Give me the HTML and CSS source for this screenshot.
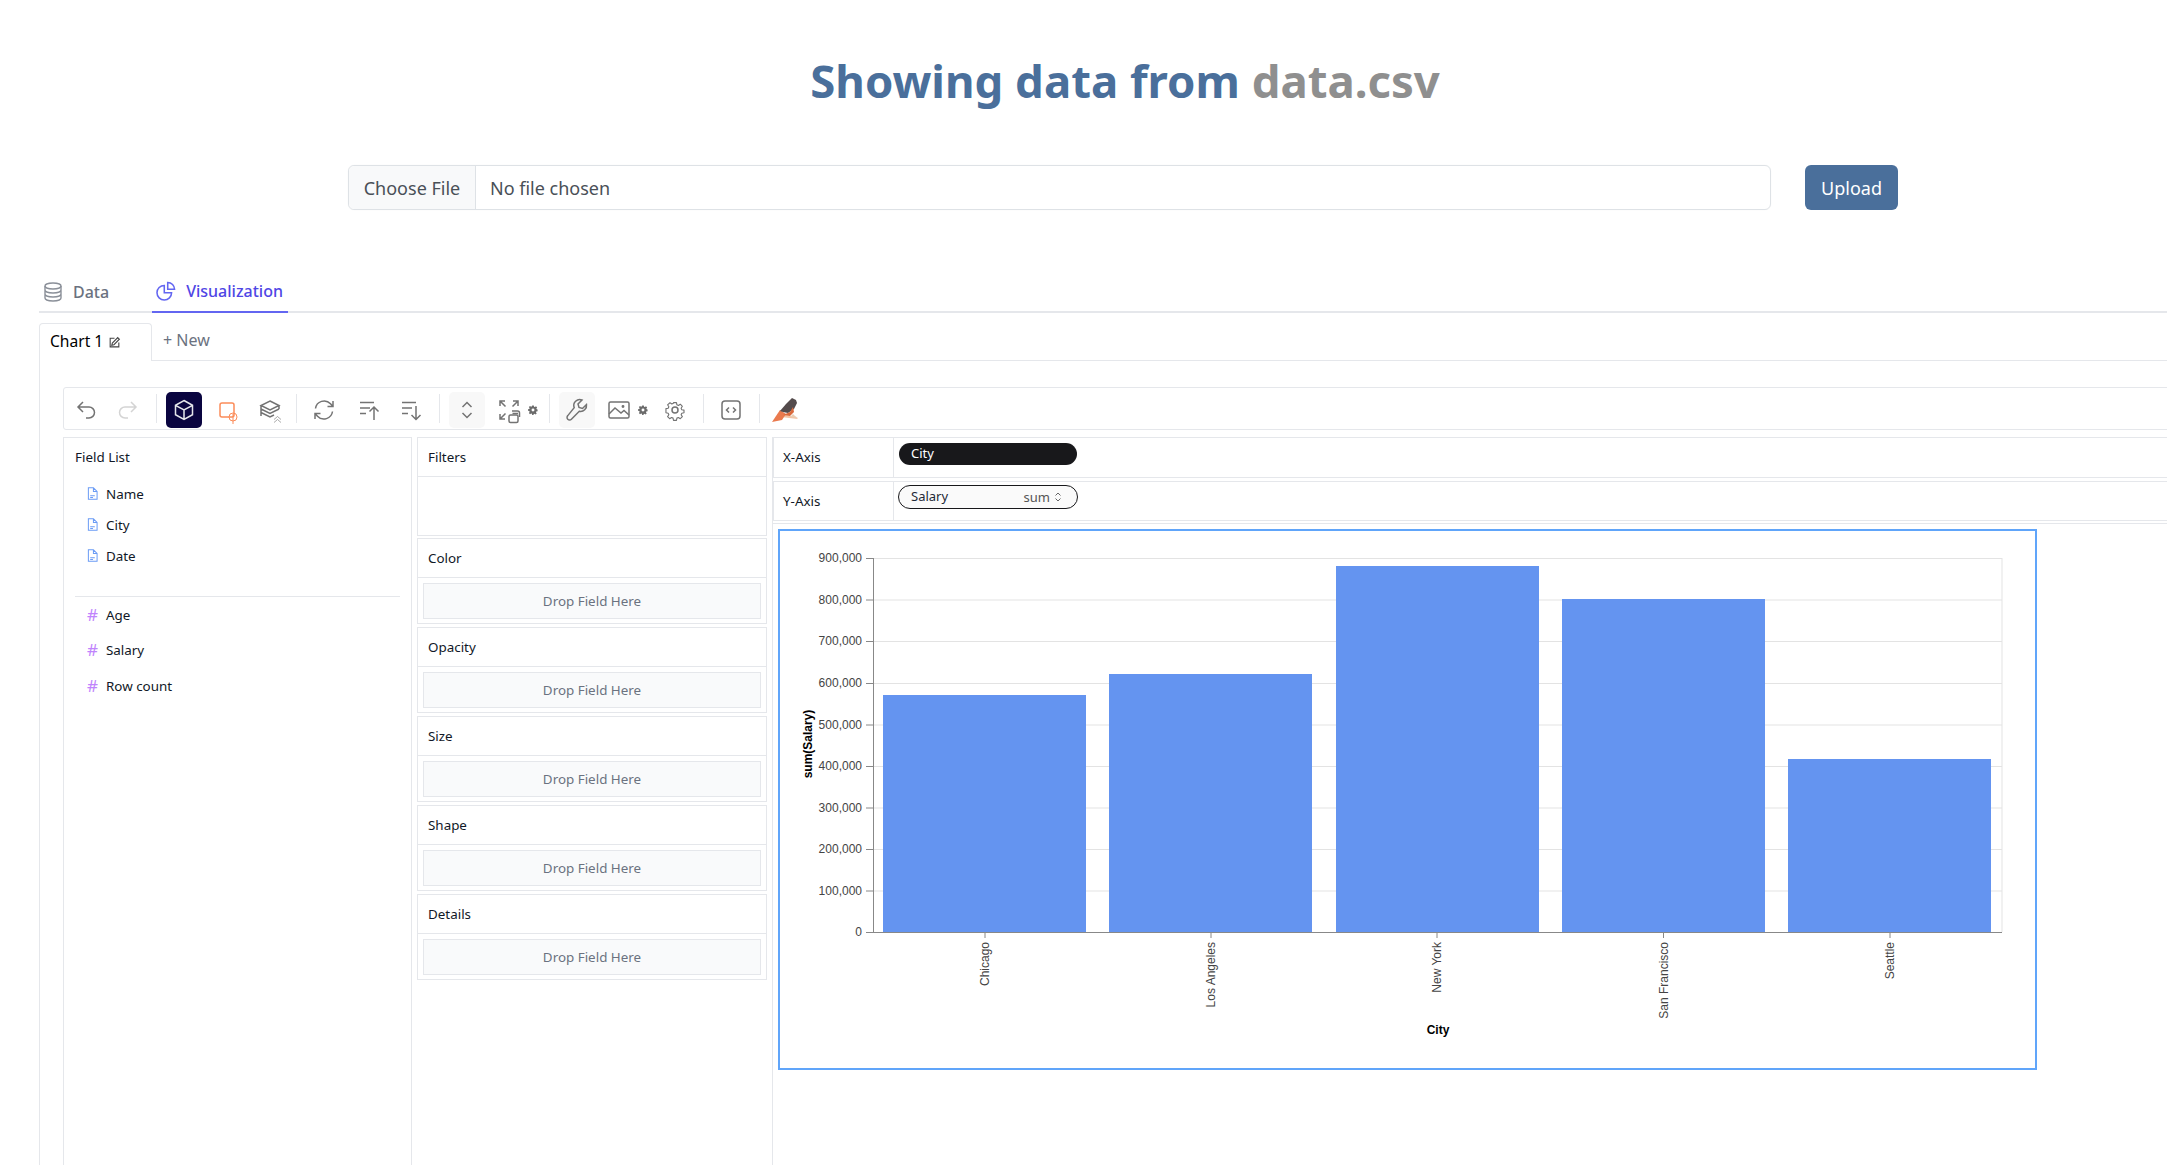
FILE: index.html
```html
<!DOCTYPE html>
<html lang="en">
<head>
    <meta charset="UTF-8">
    <title>Showing data from data.csv</title>
    <link rel="stylesheet" href="styles.css">
</head>
<body>
    <div class="page">
        <h1 class="page-title">Showing data from <span class="file-name">data.csv</span></h1>

        <form class="upload-row">
            <div class="file-input">
                <span class="file-btn">Choose File</span>
                <span class="file-status">No file chosen</span>
            </div>
            <button type="button" class="upload-btn">Upload</button>
        </form>

        <div class="main-tabs">
            <div class="main-tab">
                <svg class="main-tab-icon" viewBox="0 0 24 24" fill="none" stroke="currentColor" stroke-width="1.4"><ellipse cx="12" cy="6" rx="8" ry="3"/><path d="M4 6v12c0 1.700 3.600 3 8 3s8-1.300 8-3V6M4 10c0 1.700 3.600 3 8 3s8-1.300 8-3M4 14c0 1.700 3.600 3 8 3s8-1.300 8-3"/></svg>
                Data
            </div>
            <div class="main-tab active">
                <svg class="main-tab-icon" viewBox="-2 -2 28 28" fill="none" stroke="currentColor" stroke-width="1.8"><path d="M10 5.500a8.500 8.500 0 1 0 8.500 8.500H10z"/><path d="M14 2a8 8 0 0 1 8 8h-8z"/></svg>
                Visualization
            </div>
        </div>

        <div class="chart-tabs">
            <div class="chart-tab">Chart 1
                <svg class="edit-icon" viewBox="0 0 24 24" fill="none" stroke="currentColor" stroke-width="2"><path d="M12 4H4v16h16v-8"/><path d="M18 3l3 3L11 16l-4 1 1-4z"/></svg>
            </div>
            <div class="chart-new">+ New</div>
        </div>

        <div class="workspace">
            <div class="toolbar">
                <div class="tool"><svg viewBox="0 0 24 24"><path d="M9 14L4 9l5-5M4 9h11a5.500 5.500 0 0 1 0 11h-3"/></svg></div>
                <div class="tool disabled"><svg viewBox="0 0 24 24"><path d="M15 14l5-5-5-5M20 9H9a5.500 5.500 0 0 0 0 11h3"/></svg></div>
                <div class="tool-sep"></div>
                <div class="tool selected"><svg viewBox="0 0 24 24"><path d="M12 2.500l8.500 4.800v9.400L12 21.500l-8.500-4.800V7.300zM3.500 7.300L12 12l8.500-4.700M12 12v9.500"/></svg></div>
                <div class="tool orange"><svg viewBox="0 0 24 24"><rect x="6" y="5" width="14" height="14" rx="2"/><circle cx="19" cy="19" r="4" stroke-width="1"/><path d="M19 16v10" stroke-width="1"/></svg></div>
                <div class="tool"><svg viewBox="0 0 24 24"><g transform="translate(2 0)"><path d="M12 3l9 4.500-9 4.500-9-4.500zM3 11l9 4.500L21 11M3 14.500L12 19l4-2M3 7.500V18M21 7.500V11"/><path d="M16 21.500l3.500-3 3.500 3M16 24.500l3.500-3 3.500 3" stroke-width="1" opacity=".6"/></g></svg></div>
                <div class="tool-sep"></div>
                <div class="tool"><svg viewBox="0 0 24 24"><path d="M3.500 10.500a8.700 8.700 0 0 1 15-4.700l2.500 2.700M21 3v5.500h-5.500M20.500 13.500a8.700 8.700 0 0 1-15 4.700L3 15.500M3 21v-5.500h5.500"/></svg></div>
                <div class="tool tool-sort"><svg viewBox="0 0 24 24"><path d="M3 4.500h14M3 10h10M3 15.500h6M17 22V9M12.500 13.500L17 9l4.500 4.500"/></svg></div>
                <div class="tool"><svg viewBox="0 0 24 24"><path d="M3 4.500h14M3 10h10M3 15.500h6M17 8v13.500M12.500 17l4.500 4.500 4.500-4.500"/></svg></div>
                <div class="tool-sep"></div>
                <div class="tool soft"><svg viewBox="0 0 24 24"><path d="M7.500 9L12 4.500 16.500 9M7.500 15l4.500 4.500 4.500-4.500"/></svg></div>
                <div class="tool"><svg viewBox="0 0 24 24"><path d="M8 3H3v5M3 3l5.500 5.500M16 3h5v5M21 3l-5.500 5.500M3 16v5h5M3 21l5.500-5.500M15.500 15.500H21M15 13h5.500a2 2 0 0 1 2 2v4"/><rect x="12" y="17" width="9" height="7.500" rx="1.500" fill="#fff"/></svg></div>
                <div class="tool-mini"><svg viewBox="0 0 24 24"><path class="solid" d="M10 1h4l.6 3.100 1.900.8 2.700-1.800 2.700 2.700-1.800 2.700.8 1.900L23 11v4l-3.100.6-.8 1.900 1.800 2.700-2.700 2.700-2.700-1.800-1.900.8L13 24h-3l-.6-3.100-1.900-.8-2.700 1.800-2.700-2.700 1.800-2.700-.8-1.900L0 14v-4l3.100-.6.800-1.900-1.800-2.700 2.700-2.700 2.700 1.800 1.900-.8zM12 8.500a3.500 3.500 0 1 0 0 7 3.500 3.500 0 0 0 0-7z"/></svg></div>
                <div class="tool-sep"></div>
                <div class="tool soft"><svg viewBox="0 0 24 24"><path d="M21.500 6.500l-4 4-3.500-1-1-3.500 4-4a6 6 0 0 0-7.800 7.700L2.800 17.600a2.500 2.500 0 0 0 3.600 3.600l7.900-7.900a6 6 0 0 0 7.200-6.800z"/></svg></div>
                <div class="tool"><svg viewBox="0 0 24 24"><rect x="2" y="4" width="20" height="16" rx="1.500"/><path d="M2 16l6-6 6 5 3-2.500 5 4.500"/><circle cx="16" cy="8.500" r=".7"/></svg></div>
                <div class="tool-mini"><svg viewBox="0 0 24 24"><path class="solid" d="M10 1h4l.6 3.100 1.900.8 2.700-1.800 2.700 2.700-1.800 2.700.8 1.900L23 11v4l-3.100.6-.8 1.900 1.800 2.700-2.700 2.700-2.700-1.800-1.900.8L13 24h-3l-.6-3.100-1.900-.8-2.700 1.800-2.700-2.700 1.800-2.700-.8-1.900L0 14v-4l3.100-.6.800-1.900-1.800-2.700 2.700-2.700 2.700 1.800 1.900-.8zM12 8.500a3.500 3.500 0 1 0 0 7 3.500 3.500 0 0 0 0-7z"/></svg></div>
                <div class="tool tool-gear"><svg viewBox="0 0 24 24"><path d="M10 2h4l.6 3 2 .9 2.600-1.700 2.800 2.800-1.700 2.600.9 2 3 .6v3.600l-3 .6-.9 2 1.700 2.600-2.800 2.800-2.600-1.700-2 .9-.6 3h-4l-.6-3-2-.9-2.600 1.700-2.800-2.800 1.700-2.600-.9-2-3-.6V10.200l3-.6.9-2-1.700-2.600L5.200 2.200l2.600 1.700 2-.9z" transform="translate(3.100 3.100) scale(.74)" stroke-linejoin="round"/><circle cx="12" cy="12" r="3"/></svg></div>
                <div class="tool-sep"></div>
                <div class="tool"><svg viewBox="0 0 24 24"><rect x="3" y="3" width="18" height="18" rx="3"/><path d="M10 9.500L7.500 12l2.500 2.500M14 9.500l2.500 2.500-2.500 2.500"/></svg></div>
                <div class="tool-sep"></div>
                <div class="tool bird">
                    <svg viewBox="0 0 28 24">
                        <path fill="#f3c3a4" d="M1 24l9-5 8 1 9 1-2-2-11-2z"/>
                        <path fill="#ea7a4e" d="M1 24l8-12 6 4-4 6z"/>
                        <path fill="#544b4c" d="M9 13l6-7 3-3 3-3 4 2 1 3-3 6-6 4-5-1z"/>
                        <path fill="#d9693c" d="M12 17l7-3 3-5 1 5-4 4z"/>
                        <path fill="#e9cdb4" d="M19 19l3-3 2 2 3 2z"/>
                    </svg>
                </div>
            </div>

            <div class="builder">
                <div class="field-list">
                    <div class="panel-title">Field List</div>
                    <ul class="fields dimensions">
                        <li><svg class="doc-icon" viewBox="0 0 12 14"><path d="M1.500.8h5.500l4 4v8.400h-9.500zM7 .8v4h4M3.500 9.500h5M3.500 11.300h3"/></svg>Name</li>
                        <li><svg class="doc-icon" viewBox="0 0 12 14"><path d="M1.500.8h5.500l4 4v8.400h-9.500zM7 .8v4h4M3.500 9.500h5M3.500 11.300h3"/></svg>City</li>
                        <li><svg class="doc-icon" viewBox="0 0 12 14"><path d="M1.500.8h5.500l4 4v8.400h-9.500zM7 .8v4h4M3.500 9.500h5M3.500 11.300h3"/></svg>Date</li>
                    </ul>
                    <ul class="fields measures">
                        <li><span class="hash">#</span>Age</li>
                        <li><span class="hash">#</span>Salary</li>
                        <li><span class="hash">#</span>Row count</li>
                    </ul>
                </div>

                <div class="channels">
                    <section class="channel filters">
                        <div class="channel-title">Filters</div>
                        <div class="filters-body"></div>
                    </section>
                    <section class="channel">
                        <div class="channel-title">Color</div>
                        <div class="channel-body"><div class="drop-zone">Drop Field Here</div></div>
                    </section>
                    <section class="channel">
                        <div class="channel-title">Opacity</div>
                        <div class="channel-body"><div class="drop-zone">Drop Field Here</div></div>
                    </section>
                    <section class="channel">
                        <div class="channel-title">Size</div>
                        <div class="channel-body"><div class="drop-zone">Drop Field Here</div></div>
                    </section>
                    <section class="channel">
                        <div class="channel-title">Shape</div>
                        <div class="channel-body"><div class="drop-zone">Drop Field Here</div></div>
                    </section>
                    <section class="channel">
                        <div class="channel-title">Details</div>
                        <div class="channel-body"><div class="drop-zone">Drop Field Here</div></div>
                    </section>
                </div>

                <div class="view">
                    <div class="axis-row">
                        <div class="axis-label">X-Axis</div>
                        <div class="axis-slot"><div class="pill pill-dark">City</div></div>
                    </div>
                    <div class="axis-row axis-row-y">
                        <div class="axis-label">Y-Axis</div>
                        <div class="axis-slot"><div class="pill pill-outline"><span>Salary</span><span class="pill-agg">sum
                            <svg class="updown" viewBox="0 0 8 12"><path d="M1.500 4.500L4 2l2.500 2.500M1.500 7.500L4 10l2.500-2.500"/></svg></span></div></div>
                    </div>
                    <div class="chart-area">
                        <div class="chart-box">
                            <svg class="chart" viewBox="0 0 1259 541" width="1259" height="541">
                                <g class="grid">
                                    <path d="M96 29.500H1224M96 71H1224M96 112.500H1224M96 154.500H1224M96 196H1224M96 237.500H1224M96 279H1224M96 320.500H1224M96 362H1224"/>
                                    <path d="M1224 29V403"/>
                                </g>
                                <g fill="#6494f0">
                                    <rect x="105" y="166" width="203" height="237"/>
                                    <rect x="331" y="145" width="203" height="258"/>
                                    <rect x="558" y="37" width="203" height="366"/>
                                    <rect x="784" y="70" width="203" height="333"/>
                                    <rect x="1010" y="230" width="203" height="173"/>
                                </g>
                                <g class="axis">
                                    <path d="M95.500 29V403.500H1224"/>
                                    <path d="M88 29.500h8M88 71h8M88 112.500h8M88 154.500h8M88 196h8M88 237.500h8M88 279h8M88 320.500h8M88 362h8M88 403.500h8"/>
                                    <path d="M207 404v5M433 404v5M659 404v5M885.500 404v5M1112 404v5"/>
                                </g>
                                <g class="tick-labels y-labels">
                                    <text x="84" y="33">900,000</text>
                                    <text x="84" y="75">800,000</text>
                                    <text x="84" y="116">700,000</text>
                                    <text x="84" y="158">600,000</text>
                                    <text x="84" y="200">500,000</text>
                                    <text x="84" y="241">400,000</text>
                                    <text x="84" y="283">300,000</text>
                                    <text x="84" y="324">200,000</text>
                                    <text x="84" y="366">100,000</text>
                                    <text x="84" y="407">0</text>
                                </g>
                                <g class="tick-labels x-labels">
                                    <text transform="translate(211 413) rotate(-90)">Chicago</text>
                                    <text transform="translate(437 413) rotate(-90)">Los Angeles</text>
                                    <text transform="translate(663 413) rotate(-90)">New York</text>
                                    <text transform="translate(890 413) rotate(-90)">San Francisco</text>
                                    <text transform="translate(1116 413) rotate(-90)">Seattle</text>
                                </g>
                                <text class="axis-title" x="660" y="505">City</text>
                                <text class="axis-title" transform="translate(34 215) rotate(-90)">sum(Salary)</text>
                            </svg>
                        </div>
                    </div>
                </div>
            </div>
        </div>
    </div>
</body>
</html>
```

FILE: styles.css
```css
* {
    margin: 0;
    padding: 0;
    box-sizing: border-box;
}

html, body {
    height: 1165px;
    overflow: hidden;
}

body {
    font-family: "Noto Sans", "Open Sans", sans-serif;
    background: #fff;
    color: #111827;
}

.page {
    width: 2250px;
}

/* header */
.page-title {
    height: 165px;
    padding-top: 48px;
    text-align: center;
    font-size: 45.5px;
    line-height: 64px;
    font-weight: 700;
    color: #4a6f9b;
}

.file-name {
    color: #8f8f8f;
}

.upload-row {
    display: flex;
    gap: 34px;
    padding-left: 348px;
    height: 107px;
}

.file-input {
    width: 1423px;
    height: 45px;
    display: flex;
    border: 1px solid #dee2e6;
    border-radius: 6px;
    font-size: 18px;
    line-height: 44px;
    color: #495057;
    box-shadow: 0 0 1px rgba(0, 0, 0, 0.08);
}

.file-btn {
    width: 127px;
    text-align: center;
    background: #f8f9fa;
    border-right: 1px solid #dee2e6;
    border-radius: 6px 0 0 6px;
}

.file-status {
    padding-left: 14px;
}

.upload-btn {
    width: 93px;
    height: 45px;
    border: none;
    border-radius: 6px;
    background: #4a6f9b;
    color: #fff;
    font-family: inherit;
    font-size: 18px;
}

/* tabs */
.main-tabs {
    margin-left: 39px;
    height: 41px;
    display: flex;
    border-bottom: 2px solid #e5e7eb;
    padding-left: 2px;
}

.main-tab {
    display: flex;
    align-items: center;
    gap: 8px;
    height: 41px;
    padding-bottom: 2px;
    margin-right: 43px;
    font-size: 16px;
    font-weight: 500;
    color: #6b7280;
}

.main-tab-icon {
    width: 24px;
    height: 24px;
    color: #8b9099;
}

.main-tab.active {
    color: #4f46e5;
    border-bottom: 2px solid #6366f1;
    margin-right: 0;
    padding: 0 5px 2px 2px;
}

.main-tab.active .main-tab-icon {
    color: #6366f1;
}

.chart-tabs {
    margin: 10px 0 0 39px;
    height: 38px;
    display: flex;
    border-bottom: 1px solid #e5e7eb;
}

.chart-tab {
    width: 113px;
    height: 38px;
    padding: 0 0 3px 10px;
    display: flex;
    align-items: center;
    gap: 5px;
    font-size: 15.6px;
    color: #000;
    background: #fff;
    border: 1px solid #e5e7eb;
    border-bottom: none;
    border-radius: 4px 4px 0 0;
}

.edit-icon {
    width: 13px;
    height: 13px;
    color: #444;
    margin-top: 3px;
}

.chart-new {
    padding-left: 11px;
    line-height: 34px;
    font-size: 16px;
    color: #6b7280;
}

/* workspace frame */
.workspace {
    margin-left: 39px;
    height: 805px;
    padding: 26px 0 0 23px;
    border-left: 1px solid #e5e7eb;
}

.toolbar {
    height: 43px;
    display: flex;
    align-items: center;
    padding: 3px 0 0 1px;
    border: 1px solid #e5e7eb;
    border-radius: 3px;
}

.tool {
    width: 36px;
    height: 36px;
    margin: 0 3px;
    display: flex;
    flex: none;
    align-items: center;
    justify-content: center;
    border-radius: 5px;
}

.tool svg {
    width: 24px;
    height: 24px;
    fill: none;
    stroke: #737373;
    stroke-width: 1.5;
    overflow: visible;
}

.tool.disabled svg {
    stroke: #d4d4d4;
}

.tool.selected {
    background: #0a0540;
}

.tool.selected svg {
    stroke: #e5e7eb;
}

.tool.orange svg {
    stroke: #fb8c5a;
}

.tool.soft {
    background: #f8f8f8;
}

.tool.bird {
    margin-left: 1px;
}

.tool.bird svg {
    width: 28px;
    height: 24px;
    stroke: none;
}

.tool-sort {
    margin-left: 6px;
}

.tool-gear {
    margin-left: 5px;
}

.tool-mini {
    width: 10px;
    height: 10px;
    margin: 0 4px 0 -2px;
    display: flex;
}

.tool-mini svg {
    width: 10px;
    height: 10px;
}

.solid {
    fill: #6b6b6b;
    fill-rule: evenodd;
}

.tool-sep {
    width: 1px;
    height: 29px;
    margin: -3px 6px 0 7px;
    background: #e5e7eb;
}

/* builder columns */
.builder {
    display: flex;
    margin-top: 7px;
    height: 730px;
}

.field-list {
    width: 349px;
    border: 1px solid #e5e7eb;
    border-bottom: none;
}

.panel-title {
    font-size: 13.4px;
    line-height: 18px;
    padding: 10px 11px 0;
    margin-bottom: 12px;
}

.fields {
    list-style: none;
    font-size: 13.4px;
}

.fields li {
    display: flex;
    align-items: center;
    padding-left: 23px;
}

.dimensions {
    margin: 0 11px;
    padding-bottom: 25px;
    border-bottom: 1px solid #e5e7eb;
}

.dimensions li {
    height: 31px;
    padding-left: 12px;
}

.measures li {
    height: 35.5px;
}

.doc-icon {
    width: 11px;
    height: 13px;
    margin-right: 8px;
    fill: none;
    stroke: #6b9cf5;
    stroke-width: 1.1;
}

.hash {
    width: 11px;
    margin-right: 8px;
    color: #c084fc;
    font-size: 17px;
    line-height: 20px;
    text-align: center;
}

.channels {
    width: 361px;
    padding: 0 5px;
    display: flex;
    flex-direction: column;
    gap: 3px;
    border-right: 1px solid #e5e7eb;
}

.channel {
    height: 86px;
    border: 1px solid #e5e7eb;
}

.channel.filters {
    height: 99px;
    margin-bottom: -1px;
}

.channel-title {
    height: 39px;
    padding-left: 10px;
    font-size: 13.4px;
    line-height: 38px;
    border-bottom: 1px solid #e5e7eb;
}

.filters-body {
    height: 59px;
}

.channel-body {
    padding: 5px;
}

.drop-zone {
    height: 36px;
    border: 1px solid #e5e7eb;
    background: #f9fafb;
    text-align: center;
    font-size: 13.4px;
    line-height: 34px;
    color: #6b7280;
}

/* right side */
.view {
    flex: 1;
}

.axis-row {
    height: 41px;
    display: flex;
    border: 1px solid #e5e7eb;
}

.axis-row-y {
    margin-top: 3px;
    height: 40px;
}

.axis-label {
    width: 120px;
    padding-left: 9px;
    font-size: 13.4px;
    line-height: 38px;
    border-right: 1px solid #e5e7eb;
}

.axis-slot {
    padding: 5px 0 0 5px;
}

.pill {
    font-size: 13px;
}

.pill-dark {
    width: 178px;
    height: 22px;
    border-radius: 11px;
    padding-left: 12px;
    line-height: 20px;
    background: #18181b;
    color: #fff;
}

.pill-outline {
    width: 180px;
    height: 24px;
    margin: -2px 0 0 -1px;
    padding: 0 15px 0 12px;
    border-radius: 12px;
    line-height: 21px;
    display: flex;
    justify-content: space-between;
    border: 1px solid #18181b;
    background: #fafafa;
    color: #1f2937;
}

.pill-agg {
    display: flex;
    align-items: center;
    gap: 4px;
    color: #555;
}

.updown {
    width: 8px;
    height: 12px;
    fill: none;
    stroke: #666;
    stroke-width: 1;
}

.chart-area {
    margin-top: 2px;
    padding: 5px 0 0 5px;
    border-top: 1px solid #e5e7eb;
}

.chart-box {
    width: 1259px;
    height: 541px;
    border: 2px solid #60a5fa;
}

.chart {
    display: block;
    margin: -2px;
}

.grid path {
    fill: none;
    stroke: #e3e3e3;
    stroke-width: 1;
}

.axis path {
    fill: none;
    stroke: #888;
    stroke-width: 1;
}

.tick-labels text {
    font-family: "Liberation Sans", Arial, sans-serif;
    font-size: 12px;
    fill: #444;
}

.y-labels text,
.x-labels text {
    text-anchor: end;
}

.axis-title {
    font-family: "Liberation Sans", Arial, sans-serif;
    font-size: 12px;
    font-weight: 700;
    fill: #000;
    text-anchor: middle;
}
```
